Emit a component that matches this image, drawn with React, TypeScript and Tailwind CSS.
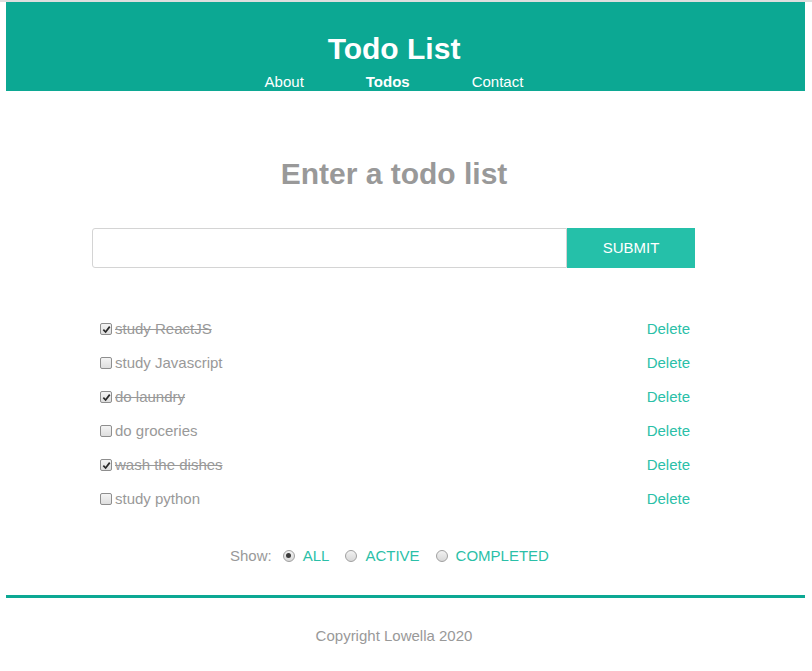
import React from "react";

const todos = [
  { text: "study ReactJS", done: true },
  { text: "study Javascript", done: false },
  { text: "do laundry", done: true },
  { text: "do groceries", done: false },
  { text: "wash the dishes", done: true },
  { text: "study python", done: false },
];

function Check({ checked }: { checked: boolean }) {
  return (
    <span className="flex h-[12px] w-[12px] items-center justify-center rounded-[2px] border border-[#8e8e8e] bg-gradient-to-b from-[#f4f4f4] to-[#dedede]">
      {checked && (
        <svg width="9" height="9" viewBox="0 0 10 10">
          <path d="M1.5 5.2 L4 7.8 L8.6 1.8" fill="none" stroke="#2a2a2a" strokeWidth="1.9" />
        </svg>
      )}
    </span>
  );
}

function Radio({ checked }: { checked: boolean }) {
  return (
    <span className="flex h-[12px] w-[12px] items-center justify-center rounded-full border border-[#a0a0a0] bg-gradient-to-b from-[#f2f2f2] to-[#d8d8d8]">
      {checked && <span className="h-[5px] w-[5px] rounded-full bg-[#3a3a3a]" />}
    </span>
  );
}

export default function App() {
  return (
    <div className="min-h-[671px] bg-white font-['Liberation_Sans',Arial,sans-serif] text-[15px]">
      <div className="h-[2px] bg-[#dedede]" />
      <header className="ml-[6px] h-[89px] w-[799px] bg-[#0ca893] pr-[23px] text-white">
        <h1 className="pt-[30px] text-center text-[30px] font-bold leading-[34px]">Todo List</h1>
        <nav className="mt-[7px] flex justify-center gap-[62px] text-[15px] leading-[17px]">
          <span>About</span>
          <span className="font-bold">Todos</span>
          <span>Contact</span>
        </nav>
      </header>

      <main className="w-[788px]">
        <h2 className="mt-[66px] text-center text-[30px] font-bold leading-[34px] text-[#999999]">
          Enter a todo list
        </h2>
        <div className="ml-[92px] mt-[37px] w-[603px]">
          <div className="flex h-[40px]">
            <input
              className="h-full flex-1 rounded-l-[3px] border border-[#d4d4d4] px-3 outline-none"
              type="text"
            />
            <button className="h-full w-[128px] bg-[#25c0a9] text-[15px] text-white">SUBMIT</button>
          </div>

          <ul className="mt-[44px]">
            {todos.map((t) => (
              <li key={t.text} className="flex h-[34px] items-center justify-between pl-[8px] pr-[5px]">
                <div className="flex items-center gap-[3px]">
                  <Check checked={t.done} />
                  <span className={"text-[#999999] " + (t.done ? "line-through" : "")}>{t.text}</span>
                </div>
                <span className="text-[#2bbfa8]">Delete</span>
              </li>
            ))}
          </ul>

          <div className="mt-[31px] flex items-center justify-center pr-[8px] leading-[17px]">
            <span className="text-[#999999]">Show:</span>
            <span className="ml-[11px]"><Radio checked /></span>
            <span className="ml-[8px] text-[#2bbfa8]">ALL</span>
            <span className="ml-[16px]"><Radio checked={false} /></span>
            <span className="ml-[8px] text-[#2bbfa8]">ACTIVE</span>
            <span className="ml-[16px]"><Radio checked={false} /></span>
            <span className="ml-[8px] text-[#2bbfa8]">COMPLETED</span>
          </div>
        </div>
      </main>

      <footer>
        <div className="ml-[6px] mt-[31px] h-[3px] w-[799px] bg-[#0ca893]" />
        <p className="mt-[29px] w-[788px] text-center leading-[17px] text-[#999999]">Copyright Lowella 2020</p>
      </footer>
    </div>
  );
}
